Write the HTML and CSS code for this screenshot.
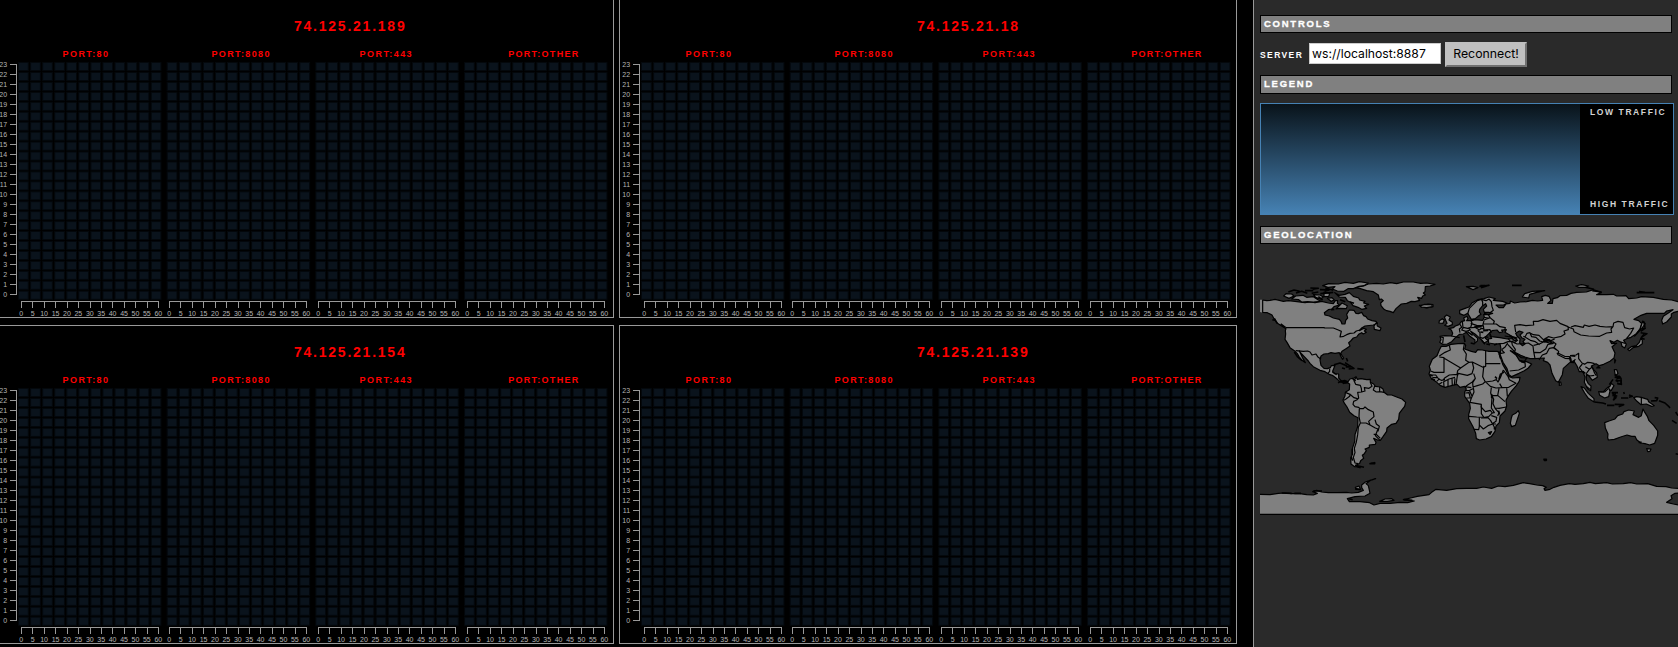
FILE: index.html
```html
<!DOCTYPE html>
<html lang="en">
<head>
<meta charset="utf-8">
<title>Traffic monitor</title>
<link rel="stylesheet" href="styles.css">
</head>
<body>
<div class="app">
  <main class="charts" id="charts"></main>
  <aside class="sidebar">
    <h2 class="bar">CONTROLS</h2>
    <form class="controls">
      <label class="server" for="server">SERVER</label>
      <input class="address" id="server" type="text" value="ws://localhost:8887">
      <button class="reconnect" type="button">Reconnect!</button>
    </form>
    <h2 class="bar bar-legend">LEGEND</h2>
    <div class="legend">
      <div class="ramp"></div>
      <div class="ramp-labels"><span>LOW TRAFFIC</span><span>HIGH TRAFFIC</span></div>
    </div>
    <h2 class="bar">GEOLOCATION</h2>
    <svg class="map" viewBox="1260 260 418 260" width="418" height="260">
      <!-- North America and Greenland -->
      <g transform="translate(1250 260) scale(.33333)">
        <path class="edge" d="M30 119H38V158L30 156Z"/>
        <path d="M38 120L50 122 60 121 75 118 88 121 100 124 115 122 135 124 165 128 180 126 195 128 215 124 235 129 250 131 256 122 263 122 262 130 268 135 252 140 246 147 235 149 223 158 225 165 238 168 250 174 268 178 273 184 276 192 285 192 287 181 293 174 290 163 298 150 312 151 318 160 325 161 335 157 341 167 348 170 353 177 366 182 378 184 382 190 370 195 345 198 335 204 328 212 342 205 349 208 343 213 349 217 340 222 335 218 326 223 320 231 310 234 302 243 296 248 300 258 288 266 276 274 272 280 277 288 281 294 278 298 273 290 268 278 255 280 243 278 235 281 222 282 213 288 210 300 213 316 222 325 232 326 241 323 244 317 255 316 251 326 248 334 254 341 266 342 266 354 274 363 284 361 295 366 288 369 280 368 270 365 258 354 249 347 240 344 225 335 210 331 190 320 180 310 175 303 165 292 155 282 148 273 158 294 166 308 155 300 147 290 142 281 133 272 120 263 111 247 105 238 107 222 106 212 108 206 95 198 80 188 72 176 66 165 52 158 38 157Z"/>
        <path class="line" d="M107 203H223V204H250L265 210 274 214 272 222 270 231 281 229 290 224 300 220 312 219 319 213 330 210M137 272L160 274 173 273 180 276 186 285 198 282 203 290 213 298M239 326V334L233 341M247 336L260 344"/>
        <path d="M340 78L355 72 380 70 400 72 422 68 440 71 460 66 490 66 512 70 530 69 555 73 540 78 526 80 525 95 520 99 526 105 518 108 515 115 503 112 509 121 495 125 484 124 470 130 454 132 438 146 430 158 420 154 410 152 402 148 393 137 392 129 400 122 394 117 388 119 385 105 370 95 350 92 331 86 313 83Z"/>
        <path d="M218 77L236 71 265 72 285 67 310 70 328 65 355 69 342 77 327 79 310 86 294 86 282 94 262 93 247 87 255 80 234 82Z"/>
        <path d="M254 98L268 106 285 103 298 98 310 109 326 114 329 120 345 124 341 129 356 133 343 138 350 145 335 148 324 142 309 137 302 127 292 122 286 112 268 111Z"/>
        <path d="M101 108L108 101 125 102 132 108 117 115ZM125 117L137 108 159 106 170 112 190 110 205 120 213 124 190 126 173 125 155 126 146 119ZM190 104L210 105 220 111 211 117 197 112ZM222 96L239 100 236 110 222 110ZM232 115L246 113 253 120 243 124ZM270 135L276 129 292 137 289 146 270 145 258 147ZM372 198L380 187 382 198 393 204 390 212 373 208ZM508 136L520 137 534 132 549 134 549 140 530 144 514 141Z"/>
        <path class="line islands" d="M115 96L132 90 149 94M138 99L155 94 172 100M165 92H190M185 100L205 96M181 84L205 85 188 88M210 89L237 90 224 94M211 101L250 97M226 84L250 91M205 110L218 120M270 119L286 125M300 126L312 130M73 175L82 190M67 179L75 181M92 192L107 203M133 276L142 290 156 302M252 314L270 309 290 317 277 312M287 321L304 320 312 325 296 327M322 326L341 328M289 294L293 304M285 308L302 319M276 324L285 326M243 149L253 148"/>
      </g>
      <!-- South America -->
      <g transform="translate(1250 370) scale(.33333)">
        <path d="M270 35L280 33 294 35 300 27 312 24 318 20 322 28 333 26 350 29 361 28 361 37 371 42 376 49 391 51 399 57 402 67 413 75 425 75 440 81 456 87 467 97 464 109 454 122 448 130 446 148 438 160 425 163 411 174 410 184 399 200 391 211 383 210 371 205 378 217 376 223 358 225 358 232 345 237 349 242 343 251 337 256 341 265 332 272 329 280 318 286 325 291 314 290 303 282 302 266 307 253 307 236 314 215 315 194 323 170 324 143 312 137 299 127 291 111 282 98 279 90 285 78 286 67 298 59 299 42 292 38Z"/>
        <path class="line" d="M318 22L312 32 317 43 331 46 334 55 335 66 323 67 326 84 320 90 311 94 309 103 315 110 326 112 330 116 340 116 345 111 355 119 370 126 372 140 365 146 356 154 360 165 376 174 384 177 376 197 390 211M335 66L345 63 343 53 357 55 366 49 361 37M374 48L370 60 379 66 390 65 402 67M389 51V64M286 67L300 73 299 79 288 87 282 91M300 73L312 83 322 86M328 116L327 140 331 159 348 159 360 165M331 159L325 172 323 194 319 216 313 235 315 248 310 262 315 279 324 281M375 149L379 162 388 169 384 184M371 193L379 193 391 205"/>
        <path class="line islands" d="M307 238V254M303 260L308 272M315 286L342 292M322 290L332 293M358 281L374 278 374 281 362 280M264 38L274 33 281 40 295 37M307 25L317 33"/>
        <!-- Antarctica -->
        <path class="fill" d="M30 373L60 374 85 370 105 369 125 371 150 371 170 374 190 375 202 370 188 365 200 361 215 366 235 368 262 368 289 367 305 369 325 367 340 361 335 353 335 345 346 336 362 330 377 326 360 332 348 341 355 347 358 360 360 370 345 378 315 380 292 386 298 395 330 395 359 398 372 405 390 400 420 400 450 397 473 398 493 393 460 389 482 384 502 379 537 374 545 367 558 358 590 361 620 356 650 355 680 355 700 351 725 355 745 348 765 350 790 346 820 338 839 341 860 345 878 347 889 352 882 356 885 361 900 358 912 352 930 346 958 341 975 343 1000 341 1020 337 1036 341 1070 338 1087 342 1120 341 1142 338 1160 342 1193 341 1220 349 1248 350 1265 354 1300 356V433H30Z"/>
        <path class="line" d="M30 373L60 374 85 370 105 369 125 371 150 371 170 374 190 375 202 370 188 365 200 361 215 366 235 368 262 368 289 367 305 369 325 367 340 361 335 353 335 345 346 336 362 330 377 326 360 332 348 341 355 347 358 360 360 370 345 378 315 380 292 386 298 395 330 395 359 398 372 405 390 400 420 400 450 397 473 398 493 393 460 389 482 384 502 379 537 374 545 367 558 358 590 361 620 356 650 355 680 355 700 351 725 355 745 348 765 350 790 346 820 338 839 341 860 345 878 347 889 352 882 356 885 361 900 358 912 352 930 346 958 341 975 343 1000 341 1020 337 1036 341 1070 338 1087 342 1120 341 1142 338 1160 342 1193 341 1220 349 1248 350 1265 354 1300 356M30 433H1300"/>
        <path d="M316 352L327 348 332 359 318 358ZM389 394L405 387 425 386 432 391 412 394Z"/>
        <path class="line islands" d="M190 363L216 363M95 369L125 370M315 356L330 358M297 386L308 389M461 389L487 391M133 370H153"/>
        <path class="sea" d="M1300 368L1275 370 1263 377 1266 386 1250 397 1270 402 1300 407"/>
      </g>
      <!-- Europe and Asia -->
      <g transform="translate(1420 260) scale(.33333)">
        <path d="M68 253L59 247 63 239 60 229 75 227 95 228 98 220 94 210 86 206 100 203 106 198 117 194 124 185 134 182 131 174 141 169 144 176 140 182 155 182 165 179 188 181 193 172 191 164 205 164 218 160 206 157 193 157 190 148 200 138 197 131 188 137 179 148 178 156 183 163 174 169 166 176 154 178 148 168 143 160 132 166 119 161 119 151 133 146 147 141 157 128 173 119 192 116 207 111 226 116 220 121 248 124 261 129 251 135 228 135 237 143 250 143 258 132 270 130 271 123 284 129 300 126 320 125 337 121 353 123 368 121 365 110 376 106 387 109 393 121 383 130 397 130 399 116 412 113 420 107 440 106 453 100 470 97 499 96 520 89 544 98 530 104 560 104 580 103 590 108 618 107 626 116 650 114 665 110 700 112 730 118 755 120 774 125 795 128V158L774 154 762 157 754 162 754 171 740 186 728 192 725 181 730 169 745 159 759 149 740 153 733 160 706 160 680 160 663 166 642 178 656 182 665 191 660 207 649 221 633 232 620 236 611 241 619 253 614 264 606 259 603 247 592 241 582 247 570 242 575 251 590 250 576 260 585 279 582 294 570 304 551 313 538 317 528 311 514 318 520 328 530 339 532 352 517 361 506 347 499 345 499 359 505 371 513 378 512 392 503 386 493 367 495 351 489 335 478 335 471 318 461 302 449 308 430 325 427 344 415 367 407 362 396 340 390 315 383 307 370 302 373 294 345 296 330 296 315 291 302 286 289 279 283 278 294 292 304 304 318 304 335 312 325 324 313 332 297 340 275 350 267 344 261 326 249 307 240 283 243 267 240 251 225 252 206 249 205 237 215 235 210 227 212 216 198 229 196 235 205 242 192 249 185 240 174 230 165 222 152 214 159 223 173 235 172 243 164 250 165 240 150 229 139 217 130 222 118 223 104 235 95 245 82 252Z"/>
        <path class="sea" d="M214 230L209 219 216 212 231 210 238 218 248 216 245 210 259 209 255 217 273 227 278 236 262 237 240 233ZM287 220L298 213 309 217 300 225 305 233 315 238 309 245 315 252 307 257 299 249 300 237 291 228ZM271 272L282 276 304 293 321 294 313 304 298 301 289 286Z"/>
        <path class="line" d="M68 250L70 233 62 231M94 228L119 233M120 193L125 202 118 207 120 218M127 184L129 202 143 205 152 202 156 189 153 182M130 203L125 210 138 214 151 210 145 204 165 202 178 210 184 205 193 207M152 190L170 196 188 197 192 182M166 203L190 197 192 211 210 209 214 218M173 211L180 218 180 232 189 235 196 230 205 232M192 180L210 173 223 184 220 192 191 192M192 160L205 164 211 174M192 172L205 174M218 192L229 192 240 200 256 203 254 210M143 162L148 145 160 133 172 122 184 118 188 126 188 137M184 118L198 122 207 117 214 125 216 140 220 151 210 158M254 228L272 231 285 235 294 242M264 235L272 245 290 240M276 236L289 244 281 249M239 251L251 250 264 245 275 245 277 255 286 268 284 277M245 269L256 260 263 249M263 253L279 270 288 278M245 270L253 278 240 281M269 333L296 330 316 320 315 306 298 303M303 306L315 309M277 245L291 252 309 251 325 249 339 258 341 275 345 296M341 256L358 252 372 245 390 249 401 245M343 277L360 278 377 267 384 253 401 250M357 300L367 285 380 280 388 265 400 263 410 270M287 216L284 196 300 194 318 197 341 195 340 184 354 184 369 179 390 184 410 181 420 190 444 200 445 209 432 213 435 222 424 229 401 234 385 230 370 239 357 226 340 224 329 218 321 220 315 231 310 229M316 232L331 241 346 245 359 254M330 219L335 230 348 232 359 243 369 246 376 235 393 242 404 237M371 244L379 241 401 247 408 252 402 262 416 274 415 280 434 289 448 290 453 299M411 278L414 284 435 295 449 296M450 287L468 285 476 280 476 296 486 309 495 313M449 296L452 307 463 308M466 297L460 307M444 201L460 207 462 215 482 225 506 228 539 229 560 219 575 217 573 207 579 200 558 201 540 199 525 195 507 199 493 195 490 202 465 197 453 201M579 200L581 189 594 184 609 187 614 203 629 207 641 204 632 220 620 235M494 313L503 307 512 308 524 311M496 320L508 328 517 321 523 338 529 347M508 328L498 342 509 348 523 346M487 312L478 323 490 338M453 288L466 289M602 246L616 250"/>
        <path d="M73 171L80 165 91 171 87 180 97 187 97 194 84 199 74 196 81 190 77 181ZM57 189L58 182 67 176 73 181 69 190ZM2 137L14 133 35 134 37 140 20 143 4 141ZM307 111L314 101 337 94 374 92 350 97 329 103 326 114ZM139 80L159 79 174 83 159 89ZM467 78L485 74 506 78 498 82 477 82ZM644 228L652 218 661 206 668 183 676 191 664 207ZM623 268L634 260 649 257 658 247 662 236 667 240 667 251 656 259 639 263 628 272ZM418 366L422 366 424 375 418 376ZM583 329L590 329 594 340 586 348ZM558 388L570 379 574 370 582 377 574 391ZM535 319L540 324 530 324ZM584 297L587 301 584 309Z"/>
        <path class="line islands" d="M178 79L207 76 183 83M181 77H195M276 76H305M496 82L522 88M517 92L545 96M650 98L703 98M657 95L675 97M671 184L675 201M666 206L676 204 662 214M662 218L681 221 665 231 672 223M661 234L674 238M592 348L601 352 590 356M587 362L603 362 604 373 592 371M585 343L594 352M568 374L579 358M152 249L164 252M131 226L135 246M142 215L158 226M185 241L195 253M199 252L210 254M190 212L204 211M163 200H184M181 216L190 217M372 245L386 242M375 240H390M268 227L292 235M450 289L454 306M222 255L231 252M488 334L496 340"/>
      </g>
      <!-- Africa -->
      <g transform="translate(1430 290) scale(.33333)">
        <path d="M34 169L48 169 63 163 84 161 103 160 107 166 104 177 124 184 137 187 143 179 157 180 177 184 201 184 209 187 208 194 214 211 219 225 229 242 236 259 248 264 270 262 268 273 259 287 244 304 234 319 228 331 230 348 225 363 210 378 208 398 198 408 195 424 184 440 168 447 149 450 139 446 137 430 129 410 116 386 116 374 121 355 119 340 104 319 104 306 109 297 104 289 90 292 81 283 64 287 45 292 30 286 18 275 3 264 -3 252 1 240 -2 229 7 208 21 197 28 180ZM244 384L247 375 257 370 265 362 268 370 256 406 245 410 241 400Z"/>
        <path class="line" d="M58 166L61 180 45 187 28 198M28 201L42 203 42 247 12 247 2 243M40 203L92 234 83 242 81 253 58 255 45 263 38 272M103 162L100 178 109 192 107 211 117 217 92 234M117 217L127 216 159 232 163 228M167 182V221L211 221M167 221L167 229 161 232 158 260 166 276 188 273 199 269 204 276 211 263 220 240M127 217L131 234 126 251 112 256 85 250 82 258 78 284M131 251L136 265 127 276 114 284 105 291M136 265L128 278 129 291 142 287 158 282 166 275 181 289 198 294 216 293 209 281M0 255L17 255 26 267 34 271 45 269M7 263L23 262M20 274L29 266M27 283L37 277M42 291L41 275 57 267 75 262M54 289V268M67 287L66 266M73 285L75 265M220 240L234 259 238 269 258 280 236 292 216 293M130 293L132 306 123 327 120 337 154 343 153 351 166 365 181 361 187 369 193 368 184 354 186 320 182 309 184 293M106 302L119 301 129 296M106 309L117 308 121 324 109 324M118 301L126 318M184 317L203 316 225 335M203 317L207 295M187 319L191 328 189 341 195 354 207 355 229 351M195 355L207 368 203 378M117 379L140 381 165 382 176 380 185 371 187 369M154 345L154 371 161 381M148 382V409L146 419 132 418M147 404L160 417 174 407 188 402 198 402M153 384L174 383 182 392 187 401 198 394 200 382 184 377M188 402L195 415M185 425L180 433 175 428ZM206 269L211 252 222 247M230 292L232 319M104 290L124 293"/>
        <path class="line islands" d="M185 312V324M206 362L208 374M195 260L201 266M-1 254L8 258M3 266L15 270M193 412L194 419M206 185L212 206M178 430H183"/>
      </g>
      <!-- Oceania -->
      <g transform="translate(1420 370) scale(.33333)">
        <path d="M554 158L567 153 585 147 593 137 608 132 612 125 626 120 643 123 639 134 656 142 664 137 669 117 675 128 682 139 687 152 701 166 713 183 713 196 704 220 689 225 675 221 662 219 650 209 645 199 635 199 621 195 602 201 583 208 565 210 563 203 564 192 556 174ZM680 236L693 237 690 244 683 245ZM483 50L493 54 505 70 522 86 522 96 505 85 494 69ZM536 65L550 66 557 58 565 51 570 63 566 80 554 84 539 76ZM641 83L650 80 664 82 683 88 686 95 703 107 695 109 679 102 663 104 651 94Z"/>
        <path class="line" d="M664 82V104M541 66L554 66 565 56M500 50L509 57"/>
        <path class="line islands" d="M523 96L548 99 558 102M561 106H583M584 103L611 104 596 110M575 68H594M578 70L588 83 579 91M577 76L592 78M586 70L581 91M611 66L613 72M603 84H625M627 75L637 79 627 82M693 93L710 92 713 84 704 83M717 92L735 99 746 109 750 114M756 151L770 160M767 126L774 137M584 22L603 25 604 43 592 40M596 17L602 25M588 29L594 36M767 251L775 253M656 217H665M372 268H379V271H373Z"/>
      </g>
    </svg>
  </aside>
</div>
<script src="charts.js"></script>
</body>
</html>
```
FILE: styles.css
```css
body {
  margin: 0;
  background: #000;
  font-family: "Liberation Sans", Arial, sans-serif;
  overflow: hidden;
}
.app {
  display: flex;
  width: 1678px;
  height: 647px;
  overflow: hidden;
}
.charts {
  flex: none;
  display: grid;
  grid-template-columns: 618px 618px;
  grid-template-rows: 319px 319px;
  gap: 7px 5px;
  margin: -1px 16px 0 -4px;
  align-content: start;
}
.chart {
  box-sizing: border-box;
  border: 1px solid #999;
  overflow: hidden;
}
.chart svg { display: block; }
.chart text {
  font-size: 7px;
  fill: #b4b4b4;
}
.chart .ip {
  font-size: 14px;
  font-weight: bold;
  fill: #f00;
}
.chart .port {
  font-size: 9px;
  font-weight: bold;
  fill: #f00;
}
.axis {
  fill: none;
  stroke: #999;
  shape-rendering: crispEdges;
}
.cell {
  fill: #0a131c;
  stroke: #04080c;
}
.sidebar {
  box-sizing: border-box;
  flex: none;
  width: 425px;
  height: 647px;
  padding: 15px 0 0 6px;
  border-left: 1px solid #999;
  background: #2a2a2a;
  overflow: hidden;
}
.bar {
  box-sizing: border-box;
  width: 412px;
  height: 18px;
  margin: 0;
  padding-left: 3px;
  border: 1px solid #000;
  background: #808080;
  color: #fff;
  font-size: 9.5px;
  line-height: 16px;
  letter-spacing: 1.75px;
  -webkit-text-stroke: .3px #fff;
}
.bar-legend { height: 19px; }
.controls {
  display: flex;
  align-items: flex-start;
  height: 33px;
  padding-top: 9px;
}
.server {
  width: 49px;
  padding-top: 8px;
  color: #fff;
  font-size: 8.5px;
  font-weight: bold;
  line-height: 10px;
  letter-spacing: 1.4px;
}
.address {
  box-sizing: border-box;
  width: 132px;
  height: 21px;
  margin: 1px 4px 0 0;
  padding: 0 2px;
  border: 1px solid #ccc;
  background: #fff;
  color: #000;
  font: 12.2px Inter, sans-serif;
}
.reconnect {
  box-sizing: border-box;
  width: 82px;
  height: 25px;
  padding: 0 0 2px;
  border: 2px solid;
  border-color: #c0c0c0 #707070 #707070 #c0c0c0;
  border-radius: 0;
  background: #c0c0c0;
  color: #000;
  font: 12.3px Inter, sans-serif;
}
.legend {
  box-sizing: border-box;
  display: flex;
  width: 414px;
  height: 112px;
  margin: 9px 0 11px;
  border: 1px solid #4682b4;
  background: #000;
}
.ramp {
  width: 319px;
  background: linear-gradient(#09131a, #4682b4);
}
.ramp-labels {
  display: flex;
  flex-direction: column;
  justify-content: space-between;
  padding: 3px 0 5px 10px;
  color: #d3d3d3;
  font-size: 8.5px;
  font-weight: bold;
  line-height: 10px;
  letter-spacing: 1.6px;
  white-space: nowrap;
}
.map {
  display: block;
  margin-top: 16px;
}
.map path {
  fill: #808080;
  stroke: #000;
  stroke-width: 3.6;
  stroke-linejoin: round;
}
.map .edge,
.map .fill { stroke: none; }
.map .sea { fill: #2a2a2a; }
.map .line { fill: none; }
.map .islands { stroke-width: 4.8; }
```
FILE: charts.js
```js
const hosts = ["74.125.21.189", "74.125.21.18", "74.125.21.154", "74.125.21.139"];
const ports = [["PORT:80", 62.6, 45.4], ["PORT:8080", 211.4, 58], ["PORT:443", 359.6, 52], ["PORT:OTHER", 508.2, 70]];
const titleWidth = { "74.125.21.18": 101 };

function chart(host) {
  let s = `<text class="ip" x="294" y="31.3" textLength="${titleWidth[host] || 110.7}">${host}</text>`;
  let axis = "M10 64.5H16.5V294.5H10";
  for (let i = 0; i < 24; i++) {
    const y = 294.5 - i * 10;
    axis += `M10 ${y}H16`;
    s += `<text x="7.1" y="${y + 2.5}" text-anchor="end">${i}</text>`;
  }
  ports.forEach(([name, x, width], p) => {
    const left = p * 148.67;
    s += `<text class="port" x="${x}" y="57.2" textLength="${width}">${name}</text>`;
    for (let c = 0; c < 12; c++) {
      for (let r = 0; r < 24; r++) {
        s += `<rect class="cell" x="${(18.5 + left + c * 12.06).toFixed(2)}" y="${(62.5 + r * 9.94).toFixed(2)}" width="9.8" height="8.2"/>`;
      }
    }
    const start = Math.floor(21 + left) + 0.5;
    axis += `M${start} 307.5V301.5H${start + 137}V307.5`;
    for (let t = 0; t <= 12; t++) {
      const x = start + t * 137 / 12;
      axis += `M${x.toFixed(2)} 301V307.5`;
      s += `<text x="${(x - 0.2).toFixed(2)}" y="316" text-anchor="middle">${t * 5}</text>`;
    }
  });
  return `<section class="chart"><svg width="616" height="317" viewBox="-3 0 616 317">${s}<path class="axis" d="${axis}"/></svg></section>`;
}

document.getElementById("charts").innerHTML = hosts.map(chart).join("");
```
